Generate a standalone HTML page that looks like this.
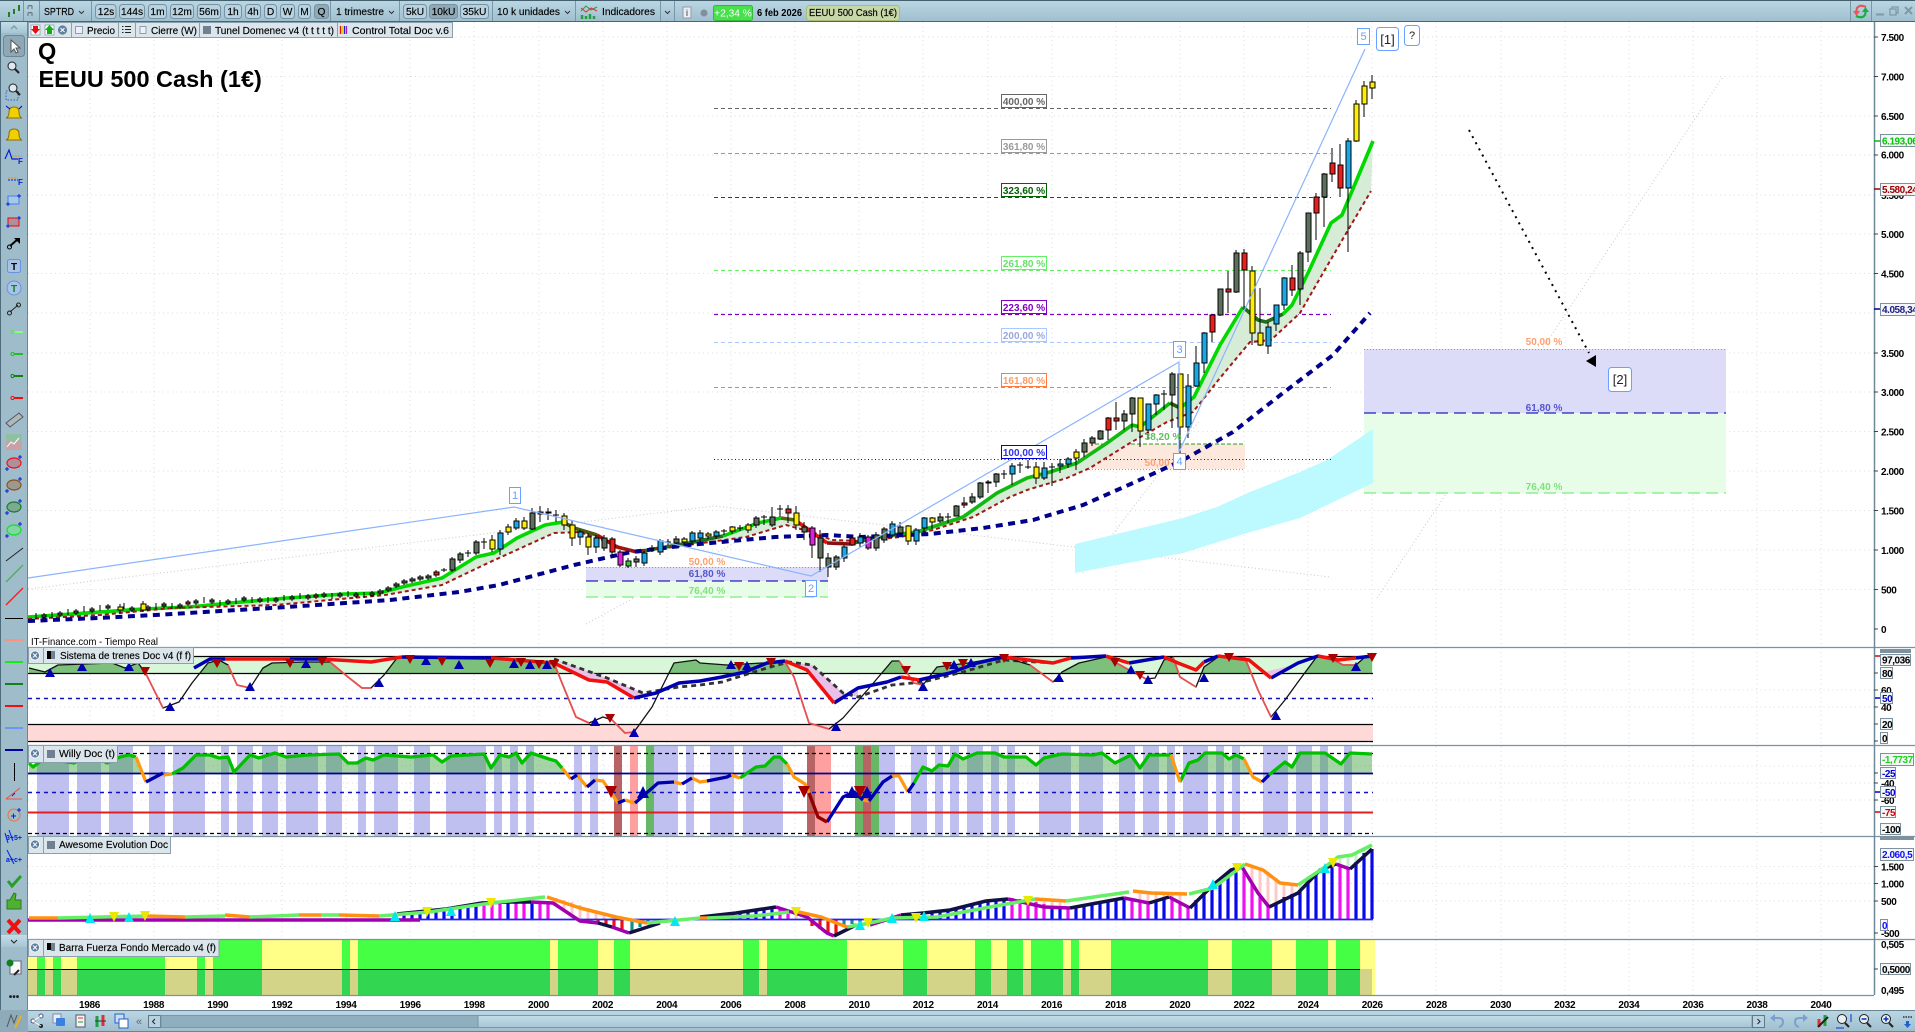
<!DOCTYPE html>
<html lang="es"><head><meta charset="utf-8"><title>EEUU 500 Cash (1€)</title>
<style>
html,body{margin:0;padding:0;background:#fff;width:1915px;height:1032px;overflow:hidden}
svg{display:block;font-family:"Liberation Sans",sans-serif}
text{fill:#000}
.t{font-size:10.2px;stroke:#000;stroke-width:.15}
.c{text-anchor:middle}
.a{font-size:10px;font-weight:bold;letter-spacing:-.45px}
.f{font-size:10px;font-weight:bold;text-anchor:middle;letter-spacing:-.3px}
.e{fill:none;stroke-linejoin:round;stroke-linecap:butt}
.v{fill:#fff;stroke:#7d919e}
</style></head><body>
<svg width="1915" height="1032" viewBox="0 0 1915 1032" xmlns="http://www.w3.org/2000/svg">
<defs>
<linearGradient id="g" x1="0" y1="0" x2="0" y2="1"><stop offset="0" stop-color="#bad7e4"/><stop offset="1" stop-color="#9fbecd"/></linearGradient>
<linearGradient id="g2" x1="0" y1="0" x2="0" y2="1"><stop offset="0" stop-color="#c2dde8"/><stop offset="1" stop-color="#a7c5d3"/></linearGradient>
<clipPath id="c1"><rect x="28" y="656" width="1346" height="17"/></clipPath>
<clipPath id="c2"><rect x="28" y="746" width="1346" height="27"/></clipPath>
</defs>
<rect width="1915" height="1032" fill="#fff"/>

<!-- grid -->
<path fill="none" stroke="#dcdcdc" stroke-dasharray="1 3.5" d="M90 22V995M154 22V995M218 22V995M282 22V995M346 22V995M410 22V995M474 22V995M539 22V995M603 22V995M667 22V995M731 22V995M795 22V995M859 22V995M923 22V995M988 22V995M1052 22V995M1116 22V995M1180 22V995M1244 22V995M1308 22V995M1372 22V995M1436 22V995M1501 22V995M1565 22V995M1629 22V995M1693 22V995M1757 22V995M1821 22V995M28 37H1874M28 76.5H1874M28 116H1874M28 155H1874M28 195H1874M28 234H1874M28 273.5H1874M28 313H1874M28 353H1874M28 392H1874M28 431.5H1874M28 471H1874M28 510.5H1874M28 550H1874M28 589.500H1874M28 690H1874M28 707H1874M28 766H1874M28 783H1874M28 800H1874M28 866.500H1874M28 883.500H1874M28 901H1874"/>

<!-- faint dotted trend lines -->
<path fill="none" stroke="#c8c8c8" stroke-dasharray="1 2.500" d="M28 589L715 506 963 534 1330 577M586 624L740 540M1083 573L1200 420M1377 598L1722 78"/>

<!-- zones -->
<rect x="586" y="567" width="242" height="14" fill="#dcdcf8"/><rect x="586" y="581" width="242" height="16" fill="#e8fde8"/>
<rect x="1083" y="444" width="162" height="25" fill="#fde8dd"/>
<rect x="1364" y="349" width="362" height="64" fill="#dcdcf8"/><rect x="1364" y="413" width="362" height="80" fill="#e8fde8"/>
<path fill="#b8faff" fill-opacity=".95" d="M1075 544L1100 538 1183 518 1217 507 1250 492 1300 472 1327 460 1373 429V483L1300 518 1247 533 1183 553 1133 562 1075 573z"/>

<!-- zone lines -->
<path fill="none" stroke="#ff7a3c" stroke-dasharray="1 2" d="M586 567.500H828M1083 469.500H1245M1364 349.500H1726"/>
<path fill="none" stroke="#2020c0" stroke-width="1.3" stroke-dasharray="12 6" d="M586 581H828M1364 413H1726"/>
<path fill="none" stroke="#80e880" stroke-width="1.3" stroke-dasharray="12 6" d="M586 597H828M1364 493H1726"/>
<path fill="none" stroke="#20a020" stroke-dasharray="4 2" d="M1095 444H1245"/>

<!-- fib lines -->
<g fill="none" stroke-dasharray="4 3">
<path stroke="#666" d="M714 108.500H1331"/><path stroke="#999" d="M714 153.500H1331"/><path stroke="#006400" d="M714 197.500H1331"/><path stroke="#66f066" d="M714 270.500H1331"/><path stroke="#8000c0" stroke-width="1.2" d="M714 314.500H1331"/><path stroke="#a8c8ff" d="M714 342.500H1331"/><path stroke="#ff7a3c" d="M714 387.500H1331"/><path stroke="#0000e0" stroke-dasharray="1 2.500" d="M714 459.500H1331"/>
</g>

<!-- MA fill -->
<path fill="#d6ecd6" d="M28 617L57 615 100 612 143 609 189 607 230 603 287 598 344 594 379 593 402 587 442 578 476 557 494 553 517 538 545 525 563 522 574 528 597 535 617 547 637 552 660 548 689 543 723 536 758 523 781 518 795 520 809 530 827 543 850 544 873 538 900 534 917 532 963 517 997 493 1027 478 1050 472 1077 463 1107 443 1132 425 1140 427 1170 403 1180 408 1194 397 1220 345 1243 307 1258 320 1266 322 1283 314 1292 305 1308 273 1331 223 1342 215 1373 141 1371 191 1344 237 1323 273 1300 313 1271 340 1250 342 1220 378 1193 412 1167 422 1130 443 1090 468 1067 478 1027 490 1010 497 973 517 933 530 900 537 860 541 832 540 815 533 786 525 746 537 666 548 631 551 580 532 554 533 488 563 442 585 385 595 275 605 172 608 100 615 28 619z"/>

<!-- green MA -->
<g class="e" stroke-width="3.600">
<path stroke="#00d800" d="M28 617L57 615 100 612 143 609 189 607 230 603 287 598 344 594 379 593 402 587 442 578 476 557 494 553 517 538 545 525 563 522"/>
<path stroke="#4a5a10" d="M563 522L574 528 597 535"/>
<path stroke="#a01008" d="M597 535L617 547 637 552"/>
<path stroke="#1f6f1f" d="M637 552L660 548 689 543 723 536"/>
<path stroke="#00d000" d="M723 536L758 523 781 518"/>
<path stroke="#556b10" d="M781 518L795 520"/>
<path stroke="#e81010" d="M795 520L809 530 827 543"/>
<path stroke="#8a1010" d="M827 543L850 544"/>
<path stroke="#2a6a1a" d="M850 544L873 538 900 534"/>
<path stroke="#10b810" d="M900 534L917 532 963 517 997 493 1027 478 1050 472 1077 463 1107 443 1132 425"/>
<path stroke="#00c000" d="M1132 425L1140 427 1170 403"/>
<path stroke="#2c5a10" d="M1170 403L1180 408"/>
<path stroke="#00d800" d="M1180 408L1194 397 1220 345 1243 307"/>
<path stroke="#1f6f1f" d="M1243 307L1258 320 1266 322 1283 314"/>
<path stroke="#00d800" d="M1283 314L1292 305 1308 273 1331 223 1342 215 1373 141"/>
</g>
<path class="e" stroke="#a01818" stroke-width="2" stroke-dasharray="4 3" d="M28 619L100 615 172 608 275 605 385 595 442 585 488 563 554 533 580 532 631 551 666 548 746 537 786 525 815 533 832 540 860 541 900 537 933 530 973 517 1010 497 1027 490 1067 478 1090 468 1130 443 1167 422 1193 412 1220 378 1250 342 1271 340 1300 313 1323 273 1344 237 1371 191"/>
<path class="e" stroke="#00008b" stroke-width="4" stroke-dasharray="7 5.500" d="M28 621L98 618 155 615 287 607 390 600 459 592 499 585 574 565 631 552 689 545 775 537 827 535 861 537 930 534 983 528 1033 520 1083 505 1133 483 1183 460 1233 432 1283 393 1333 355 1370 313"/>

<!-- candles -->
<g shape-rendering="crispEdges" stroke="#000">
<path fill="none" d="M1372 75V99M1364 81V117M1356 100V142M1348 138V252M1340 144V197M1332 148V182M1324 173V227M1316 193V240M1308 213V262M1300 251V305M1292 265V296M1284 277V310M1276 305V331M1268 322V354M1260 288V346M1252 266V345M1244 249V307M1236 250V293M1228 271V313M1220 289V316M1212 315V342M1204 332V373M1196 346V387M1188 374V438M1180 374V453M1172 372V428M1164 390V410M1156 394V415M1148 404V439M1140 398V447M1132 397V432M1124 410V430M1116 402V430M1108 417V440M1100 430V440M1092 436V446M1084 439V457M1076 449V470M1068 457V468M1060 459V473M1052 463V486M1044 462V480M1036 462V484M1028 460V469M1020 462V473M1012 463V485M1004 470V479M996 473V487M988 480V493M980 482V499M972 493V504M964 497V508M956 505V516M948 513V523M940 513V523M932 517V529M924 517V532M916 528V545M908 525V545M900 522V535M892 521V538M884 527V543M876 532V551M868 535V550M860 533V547M852 535V546M844 545V562M836 555V570M828 553V577M820 530V572M812 526V558M804 522V540M796 506V530M788 505V523M780 505V517M772 507V527M764 515V525M756 516V528M748 523V533M740 525V531M732 526V534M724 529V535M716 530V539M708 532V539M700 530V542M692 531V545M684 537V545M676 536V546M668 539V545M660 539V555M652 545V552M644 551V566M636 556V567M628 558V568M620 550V567M612 537V555M604 535V551M596 535V553M588 533V555M580 530V545M572 520V546M564 513V530M556 510V522M548 508V520M540 506V522M532 508V530M524 517V530M516 518V530M508 524V535M500 530V555M492 535V552M484 538V549M476 540V555M468 550V557M460 552V563M452 557V572M444 568V572M436 570V577M428 574V580M420 575V581M412 577V583M404 579V585M396 582V588M388 586V592M380 589V595M372 591V597M364 592V598M356 592V598M348 591V597M340 592V598M332 593V599M324 592V598M316 593V599M308 594V600M300 593V599M292 595V601M284 595V601M276 597V603M268 597V603M260 597V603M252 597V603M244 596V602M236 598V604M228 599V605M220 600V606M212 598V604M204 597V603M196 599V605M188 600V606M180 603V609M172 603V609M164 602V608M156 603V609M148 605V611M143 601V612M132 606V612M124 603V609M120 604V613M108 604V610M100 605V611M92 607V613M84 606V612M76 609V615M68 609V615M60 611V617M52 612V618M44 613V619M36 613V619"/>
<path fill="#ffee00" d="M1370 82h5v6h-5zM1362 86h5v18h-5zM1354 104h5v37h-5zM1258 333h5v12h-5zM1250 271h5v62h-5zM1178 374h5v53h-5zM1138 398h5v33h-5zM1074 452h5v6h-5zM1034 467h5v11h-5zM930 518h5v4h-5zM906 526h5v15h-5zM794 513h5v12h-5zM746 525h5v5h-5zM730 527h5v4h-5zM706 534h5v2h-5zM682 539h5v3h-5zM586 537h5v10h-5zM570 525h5v13h-5zM562 516h5v9h-5zM522 521h5v7h-5zM506 527h5v5h-5zM490 540h5v9h-5zM141 604h5v6h-5zM118 607h5v3h-5z"/>
<path fill="#18a8e8" d="M1346 141h5v47h-5zM1282 278h5v27h-5zM1274 305h5v19h-5zM1266 327h5v19h-5zM1202 333h5v30h-5zM1194 363h5v23h-5zM1186 386h5v41h-5zM1154 395h5v9h-5zM1146 404h5v26h-5zM1066 459h5v5h-5zM1058 464h5v2h-5zM1042 468h5v10h-5zM1010 466h5v8h-5zM922 518h5v10h-5zM914 530h5v11h-5zM890 524h5v11h-5zM858 537h5v6h-5zM842 547h5v11h-5zM714 532h5v4h-5zM698 533h5v5h-5zM690 533h5v8h-5zM658 541h5v11h-5zM642 553h5v10h-5zM594 538h5v9h-5zM578 532h5v5h-5zM514 521h5v7h-5zM498 533h5v16h-5z"/>
<path fill="#5d6f5d" d="M1322 174h5v23h-5zM1306 213h5v39h-5zM1298 253h5v36h-5zM1234 253h5v39h-5zM1218 289h5v26h-5zM1170 374h5v21h-5zM1130 398h5v16h-5zM1122 414h5v7h-5zM1098 431h5v8h-5zM1090 438h5v5h-5zM1082 443h5v9h-5zM994 474h5v8h-5zM978 483h5v14h-5zM970 497h5v5h-5zM954 506h5v10h-5zM938 517h5v4h-5zM898 527h5v6h-5zM882 529h5v11h-5zM874 535h5v13h-5zM834 557h5v10h-5zM826 558h5v9h-5zM818 538h5v20h-5zM802 527h5v5h-5zM770 517h5v8h-5zM754 518h5v7h-5zM674 539h5v4h-5zM634 559h5v3h-5zM602 538h5v10h-5zM538 512h5v2h-5zM530 513h5v16h-5zM474 542h5v11h-5zM458 554h5v6h-5zM450 559h5v11h-5zM426 576h5v2h-5zM418 577h5v2h-5zM410 579h5v2h-5zM402 581h5v2h-5zM394 584h5v2h-5zM386 588h5v2h-5zM378 591h5v2h-5zM370 593h4v2h-4zM354 594h4v2h-4zM338 594h4v2h-4zM322 594h4v2h-4zM306 596h4v2h-4zM290 597h4v2h-4zM274 599h4v2h-4zM258 599h4v2h-4zM242 598h4v2h-4zM226 601h4v2h-4zM210 600h4v2h-4zM194 601h4v2h-4zM178 605h4v2h-4zM162 604h4v2h-4zM146 607h4v2h-4zM130 608h4v2h-4zM106 606h4v2h-4zM90 609h4v2h-4zM74 611h4v2h-4zM58 613h4v2h-4zM42 615h4v2h-4z"/>
<path fill="#ee1c1c" d="M1338 165h5v23h-5zM1330 163h5v11h-5zM1314 197h5v16h-5zM1290 278h5v12h-5zM1242 253h5v17h-5zM1226 289h5v3h-5zM1210 315h5v17h-5zM1114 418h5v3h-5zM1106 418h5v12h-5zM986 482h5v1h-5zM962 503h5v2h-5zM850 538h5v7h-5zM786 509h5v4h-5zM610 539h5v13h-5zM546 512h5v1h-5zM434 572h5v3h-5zM314 595h4v2h-4zM186 602h4v2h-4z"/>
<path fill="#e020e0" d="M866 537h5v11h-5zM810 528h5v17h-5zM618 552h5v13h-5z"/>
<path fill="#33cc33" d="M626 561h5v5h-5z"/>
<path fill="none" d="M1161 394h6M1049 467h6M1025 467h6M1017 465h6M1001 474h6M945 517h6M777 509h6M761 517h6M737 528h6M721 531h6M665 542h6M649 548h6M553 515h6M481 542h6M465 553h6M441 570h6"/>
</g>

<!-- elliott -->
<path fill="none" stroke="#8ab4ff" stroke-width="1.200" d="M28 578L514 507 811 576 1179 362V452L1365 49"/>
<path fill="none" stroke="#000" stroke-width="2" stroke-dasharray="2 5" d="M1469 130L1589 353"/>
<path fill="#000" d="M1596 355V367L1586 361z"/>

<!-- fib labels -->
<g class="c" font-size="10" font-weight="bold">
<rect class="v" x="1001.500" y="94.500" width="45" height="13" fill="#fff" style="stroke:#666"/><text x="1024" y="105" fill="#666" style="fill:#666">400,00 %</text>
<rect x="1001.500" y="139.500" width="45" height="13" fill="#fff" stroke="#999"/><text x="1024" y="150" style="fill:#999">361,80 %</text>
<rect x="1001.500" y="183.500" width="45" height="13" fill="#fff" stroke="#006400"/><text x="1024" y="194" style="fill:#006400">323,60 %</text>
<rect x="1001.500" y="256.500" width="45" height="13" fill="#fff" stroke="#66f066"/><text x="1024" y="267" style="fill:#66e066">261,80 %</text>
<rect x="1001.500" y="300.500" width="45" height="13" fill="#fff" stroke="#8000c0"/><text x="1024" y="311" style="fill:#8000c0">223,60 %</text>
<rect x="1001.500" y="328.500" width="45" height="13" fill="#fff" stroke="#a8c8ff"/><text x="1024" y="339" style="fill:#98a8e0">200,00 %</text>
<rect x="1001.500" y="373.500" width="45" height="13" fill="#fff" stroke="#ff7a3c"/><text x="1024" y="384" style="fill:#ff9a60">161,80 %</text>
<rect x="1001.500" y="445.500" width="45" height="13" fill="#fff" stroke="#0000e0"/><text x="1024" y="456" style="fill:#3030f0">100,00 %</text>
<text x="707" y="565" style="fill:#ffa070">50,00 %</text>
<text x="707" y="577" style="fill:#5555cc">61,80 %</text>
<text x="707" y="594" style="fill:#80e080">76,40 %</text>
<text x="1163" y="440" style="fill:#60c060">38,20 %</text>
<text x="1163" y="466" style="fill:#ffa070">50,00 %</text>
<text x="1544" y="345" style="fill:#ffa070">50,00 %</text>
<text x="1544" y="411" style="fill:#5555cc">61,80 %</text>
<text x="1544" y="490" style="fill:#80e080">76,40 %</text>
</g>

<!-- wave labels -->
<g fill="#fff" stroke="#6aa0ff">
<rect x="509.500" y="487.500" width="11" height="16"/><rect x="805.500" y="580.500" width="11" height="16"/><rect x="1173.500" y="341.500" width="12" height="16"/><rect x="1173.500" y="453.500" width="12" height="16"/><rect x="1357.500" y="28.500" width="12" height="16"/><rect x="1376.500" y="27.500" width="22" height="23" rx="3"/><rect x="1404.500" y="25.500" width="15" height="20" rx="3"/><rect x="1608.500" y="367.500" width="23" height="24" rx="3"/>
</g>
<g class="c" font-size="11">
<text x="515" y="499" style="fill:#6aa0ff">1</text><text x="811" y="592" style="fill:#6aa0ff">2</text><text x="1179.500" y="353" style="fill:#6aa0ff">3</text><text x="1179.500" y="465" style="fill:#6aa0ff">4</text><text x="1363.500" y="40" style="fill:#6aa0ff">5</text>
<text x="1387.500" y="44" font-size="13" style="fill:#222">[1]</text><text x="1412" y="39" font-size="11" style="fill:#222">?</text><text x="1620" y="384" font-size="13" style="fill:#222">[2]</text>
</g>

<!-- title -->
<text x="38" y="59" font-size="23.500" font-weight="bold">Q</text>
<text x="38.500" y="87" font-size="23.500" font-weight="bold">EEUU 500 Cash (1€)</text>
<text x="31" y="645" class="t" style="stroke-width:0" textLength="127" lengthAdjust="spacingAndGlyphs">IT-Finance.com - Tiempo Real</text>

<!-- PANE 1 -->
<rect x="28" y="656" width="1345" height="17" fill="#d8f6d8"/>
<rect x="28" y="724" width="1345" height="17" fill="#ffd8d8"/>
<path clip-path="url(#c1)" fill="#7cc07c" d="M29 668L45 672 58 665 112 663 125 668 138 663 145 672 163 708 179 702 192 683 208 663 219 660 228 665 237 685 250 688 263 668 272 663 304 662 330 662 348 677 362 688 371 688 384 675 397 658 424 658 491 658 554 663 562 683 576 717 589 723 603 717 612 720 625 733 634 732 652 707 674 663 696 660 700 663 727 665 762 663 785 662 794 677 809 723 829 729 843 718 870 687 892 661 899 661 914 683 923 685 937 667 968 663 1004 657 1030 665 1053 682 1062 672 1079 663 1106 657 1129 670 1146 679 1155 678 1164 660 1173 657 1180 677 1196 687 1204 667 1218 657 1245 658 1258 690 1271 717 1285 700 1298 682 1318 655 1334 660 1343 665 1356 665 1365 657 1372 657V741H29z"/>
<path fill="none" stroke="#000" stroke-width="1.200" d="M28 656.500H1373M28 673.500H1373M28 724.500H1373M28 741.500H1373"/>
<path fill="none" stroke="#1010c0" stroke-width="1.500" stroke-dasharray="4 4" d="M28 698.500H1373"/>
<path fill="#e8c0e8" d="M554 659L589 680 607 682 634 698 656 693 643 693 607 678zM789 662L812 665 843 693 858 697 858 688 834 703 807 670zM1245 659L1271 678 1298 663 1285 667 1265 672z"/>
<path class="e" stroke="#333" stroke-width="2.800" stroke-dasharray="5 4" d="M554 659L607 678 643 693 679 687 700 685 722 682 767 668 789 662 812 665 843 693 858 697 892 685 923 682 963 672 1004 660 1053 663"/>
<path class="e" stroke="#111" stroke-width="1.300" d="M29 668L45 672 58 665 112 663 125 668 138 663 145 672 163 708 179 702 192 683 208 663 219 660 228 665 237 685 250 688 263 668 272 663 304 662 330 662 348 677 362 688 371 688 384 675 397 658 424 658 491 658 554 663 562 683 576 717 589 723 603 717 612 720 625 733 634 732 652 707 674 663 696 660 700 663 727 665 762 663 785 662 794 677 809 723 829 729 843 718 870 687 892 661 899 661 914 683 923 685 937 667 968 663 1004 657 1030 665 1053 682 1062 672 1079 663 1106 657 1129 670 1146 679 1155 678 1164 660 1173 657 1180 677 1196 687 1204 667 1218 657 1245 658 1258 690 1271 717 1285 700 1298 682 1318 655 1334 660 1343 665 1356 665 1365 657 1372 657"/>
<g class="e" stroke="#e85050" stroke-width="1.800"><path d="M145 672L163 708M228 665L237 685 250 688M330 662L348 677 362 688 371 688M554 663L562 683 576 717 589 723M612 720L625 733 634 732M785 662L794 677 809 723 829 729M899 661L914 683 923 685M1030 665L1053 682M1106 657L1129 670 1146 679M1173 657L1180 677 1196 687M1245 658L1258 690 1271 717M1334 660L1343 665 1356 665"/></g>
<g class="e" stroke-width="3.500">
<path stroke="#0000b0" d="M194 668L210 659 225 659M290 659L321 659M402 657L491 658M634 698L656 693 679 683 700 681 722 677 745 672 767 663 785 661M834 703L858 688 887 682 901 677M919 680L950 673 977 663 1004 657M1071 658L1106 656M1129 663L1164 657M1204 662L1218 656M1271 678L1298 663 1318 656M1356 658L1372 656"/>
<path stroke="#f01010" d="M225 659L290 659M321 659L371 662 402 657M491 658L554 663 589 680 607 682 634 698M785 661L807 670 834 703M901 677L919 680M1004 657L1053 663 1071 658M1106 656L1129 663M1164 657L1178 663 1196 670 1204 662M1218 656L1249 660 1271 678M1318 656L1338 660 1356 658"/>
</g>
<path fill="#0000b0" d="M45 677l5-9 5 9zM77 671l5-9 5 9zM124 671l5-9 5 9zM165 711l5-9 5 9zM245 691l5-9 5 9zM301 668l5-9 5 9zM374 687l5-9 5 9zM421 665l5-9 5 9zM454 669l5-9 5 9zM509 668l5-9 5 9zM525 669l5-9 5 9zM542 669l5-9 5 9zM590 726l5-9 5 9zM629 737l5-9 5 9zM726 669l5-9 5 9zM742 670l5-9 5 9zM831 731l5-9 5 9zM918 691l5-9 5 9zM949 669l5-9 5 9zM966 667l5-9 5 9zM1054 682l5-9 5 9zM1126 674l5-9 5 9zM1143 684l5-9 5 9zM1199 682l5-9 5 9zM1271 720l5-9 5 9zM1351 671l5-9 5 9z"/>
<path fill="#a80000" d="M140 667h10l-5 9zM212 659h10l-5 9zM285 659h10l-5 9zM317 657h10l-5 9zM405 655h10l-5 9zM437 657h10l-5 9zM485 659h10l-5 9zM516 658h10l-5 9zM534 660h10l-5 9zM549 660h10l-5 9zM605 714h10l-5 9zM734 662h10l-5 9zM766 658h10l-5 9zM901 666h10l-5 9zM942 662h10l-5 9zM958 659h10l-5 9zM999 654h10l-5 9zM1110 658h10l-5 9zM1135 671h10l-5 9zM1224 653h10l-5 9zM1328 654h10l-5 9zM1367 653h10l-5 9z"/>

<!-- PANE 2 -->
<path fill="#c0c0f0" d="M37 746h32v90h-32zM77 746h24v90h-24zM109 746h24v90h-24zM149 746h16v90h-16zM173 746h32v90h-32zM221 746h8v90h-8zM237 746h16v90h-16zM262 746h16v90h-16zM286 746h32v90h-32zM326 746h16v90h-16zM358 746h8v90h-8zM374 746h24v90h-24zM414 746h16v90h-16zM446 746h40v90h-40zM494 746h8v90h-8zM510 746h8v90h-8zM526 746h8v90h-8zM574 746h8v90h-8zM590 746h8v90h-8zM654 746h24v90h-24zM686 746h8v90h-8zM710 746h24v90h-24zM743 746h40v90h-40zM879 746h16v90h-16zM911 746h16v90h-16zM935 746h8v90h-8zM950 746h9v90h-9zM967 746h16v90h-16zM991 746h8v90h-8zM1007 746h8v90h-8zM1039 746h32v90h-32zM1079 746h24v90h-24zM1119 746h16v90h-16zM1143 746h16v90h-16zM1167 746h8v90h-8zM1183 746h25v90h-25zM1216 746h8v90h-8zM1232 746h8v90h-8zM1263 746h25v90h-25zM1296 746h16v90h-16zM1320 746h8v90h-8zM1344 746h8v90h-8z"/>
<path fill="#b86464" d="M614 746h8v90h-8zM807 746h8v90h-8zM863 746h8v90h-8z"/>
<path fill="#ffa0a0" d="M630 746h8v90h-8zM815 746h16v90h-16z"/>
<path fill="#66b866" d="M646 746h8v90h-8zM855 746h8v90h-8zM871 746h8v90h-8z"/>
<path clip-path="url(#c2)" fill="#3ca03c" fill-opacity=".45" d="M29 763L33 767 45 758 67 762 74 763 85 757 98 758 107 763 120 757 129 755 136 757 146 782 172 774 183 768 196 755 210 755 219 758 228 757 234 772 250 755 259 758 275 753 286 757 308 755 339 754 348 763 357 763 366 758 373 760 384 755 411 757 433 755 442 762 451 756 484 754 491 768 500 755 509 757 516 753 522 763 531 753 549 759 556 761 562 768 571 779V800H731V775L740 778 756 767 765 766 774 757 780 757 787 764 794 777 805 790H908L914 783 923 767 932 771 939 765 948 766 955 754 963 759 977 753 995 753 1004 757 1026 757 1036 765 1044 758 1062 754 1093 755 1102 753 1115 763 1131 755 1140 768 1149 755 1171 755 1180 782 1189 763 1198 760 1205 753 1222 753 1229 759 1236 755 1244 759 1253 777 1262 782 1269 775 1285 762 1292 767 1300 753 1325 753 1341 764 1350 753 1372 754V790H29z"/>
<path fill="none" stroke="#000" stroke-width="1.200" stroke-dasharray="4 3" d="M28 753.500H1373M28 833.500H1373"/>
<path fill="none" stroke="#000090" stroke-width="1.800" d="M28 773.500H1373"/>
<path fill="none" stroke="#1010c0" stroke-width="1.500" stroke-dasharray="4 4" d="M28 792.500H1373"/>
<path fill="none" stroke="#e02020" stroke-width="2" d="M28 812.500H1373"/>
<g class="e" stroke-width="3.300">
<path stroke="#00c000" d="M29 763L33 767 45 758 67 762 74 763 85 757 98 758 107 763 120 757 129 755 136 757M172 774L183 768 196 755 210 755 219 758 228 757 234 772 250 755 259 758 275 753 286 757 308 755 339 754 348 763 357 763 366 758 373 760 384 755 411 757 433 755 442 762 451 756 484 754 491 768 500 755 509 757 516 753 522 763 531 753 549 759 556 761 562 768M740 778L756 767 765 766 774 757 780 757 787 764M914 783L923 767 932 771 939 765 948 766 955 754 963 759 977 753 995 753 1004 757 1026 757 1036 765 1044 758 1062 754 1093 755 1102 753 1115 763 1131 755 1140 768 1149 755 1171 755M1180 782L1189 763 1198 760 1205 753 1222 753 1229 759 1236 755 1244 759M1269 775L1285 762 1292 767 1300 753 1325 753 1341 764 1350 753 1372 754"/>
<path stroke="#ff9a10" d="M136 757L146 782M163 775L172 774M562 768L571 779M577 775L587 787M595 780L603 781 618 803M625 800L635 803M674 782L682 784M692 778L700 782 707 781M731 775L740 778M787 764L794 777 805 784 809 793M863 800L869 801M892 776L899 776 908 792M1171 755L1180 782M1244 759L1253 777 1262 782"/>
<path stroke="#0000b0" d="M146 782L163 773M571 779L577 775M587 787L595 780M618 803L625 800M635 803L658 783 674 782M682 784L692 778M707 781L727 777 731 775M827 822L843 797 854 792 863 800M869 801L883 782 892 776M908 792L914 783M1262 782L1269 775"/>
<path stroke="#900000" d="M809 793L818 817 827 822"/>
</g>
<path fill="#a80000" d="M605 786h12l-6 12zM798 786h12l-6 12zM854 786h12l-6 12z"/>
<path fill="#0000b0" d="M637 798l6-12 6 12zM846 798l6-12 6 12zM861 798l6-12 6 12z"/>

<!-- PANE 3 -->
<path fill="none" stroke="#ffc8c8" stroke-width="3" d="M556 898V905M564 900V912M572 902V919M580 905V919M588 908V919M596 911V919M604 913V919M612 915V919M620 917V919M796 912V919M804 915V919M1012 899V910M1020 899V910M1028 899V908M1036 899V908M1044 900V908M1052 900V908M1060 901V908M1140 892V900M1148 892V903M1156 893V900M1164 893V898M1172 894V899M1180 894V903M1244 864V869M1252 866V884M1260 868V897M1268 872V906M1276 878V903M1284 883V897M1292 885V894"/>
<path fill="none" stroke="#c8f0c8" stroke-width="3" d="M1300 884V892M1308 878V883M1316 872V874M1340 856V866M1348 855V868M1356 854V862M1364 848V853"/>
<path fill="none" stroke="#0808f0" stroke-width="3.200" d="M404 919V914M412 919V913M420 919V912M428 919V911M436 919V910M444 919V909M452 919V908M460 919V906M468 919V905M476 919V904M508 919V902M532 919V902M716 919V914M724 919V914M732 919V913M740 919V912M748 919V911M756 919V910M764 919V909M772 919V908M924 919V913M932 919V912M940 919V911M948 919V910M956 919V908M964 919V906M972 919V904M980 919V902M988 919V901M996 919V900M1004 919V899M1052 919V907M1060 919V908M1076 919V908M1084 919V906M1092 919V905M1100 919V904M1108 919V902M1116 919V900M1124 919V898M1156 919V901M1164 919V898M1196 919V900M1204 919V892M1212 919V886M1220 919V880M1228 919V873M1236 919V868M1276 919V903M1284 919V897M1292 919V894M1300 919V892M1308 919V883M1316 919V874M1324 919V869M1332 919V865M1356 919V862M1364 919V853M1372 919V849"/>
<path fill="none" stroke="#f010f0" stroke-width="3.200" d="M484 919V903M492 919V903M500 919V902M516 919V902M524 919V902M540 919V903M548 919V903M780 919V907M788 919V911M1012 919V898M1020 919V899M1028 919V900M1036 919V902M1044 919V904M1068 919V908M1132 919V898M1140 919V900M1148 919V903M1172 919V898M1180 919V903M1188 919V907M1244 919V869M1252 919V884M1260 919V897M1268 919V906M1340 919V866M1348 919V868"/>
<path fill="none" stroke="#f01010" stroke-width="3.200" d="M598 919V923M606 919V926M614 919V928M622 919V931M812 919V926M820 919V929M828 919V933M836 919V935"/>
<path fill="none" stroke="#109090" stroke-width="3.200" d="M632 919V931M640 919V927M648 919V924M844 919V926M852 919V924M860 919V923"/>
<path fill="none" stroke="#2020f0" stroke-width="1.800" d="M28 919.500H1373"/>
<g class="e" stroke-width="3.500">
<path stroke="#a000b0" d="M531 902L553 903 580 921 598 923M612 927L629 933M776 907L807 917 827 933 834 936M870 925L892 918 901 915M1008 899L1044 907 1070 908M1124 898L1149 903M1169 897L1190 908M1242 867L1258 893 1269 907M1336 864L1350 869M28 920H420"/>
<path stroke="#111144" d="M397 914L446 909 482 903 509 902 531 902M598 923L612 927M629 933L660 923M700 917L736 913 776 907M834 936L856 925M901 915L923 913 950 910 986 901 1008 899M1070 908L1124 898M1149 903L1169 897M1190 908L1213 885 1231 870 1242 867M1269 907L1298 893 1320 870 1336 864M1350 869L1372 849"/>
<path stroke="#66ee66" d="M58 918L147 916M185 917L225 916M250 917L299 915M321 915L339 915M379 916L429 912 491 903 545 897M647 923L700 918M707 918L754 916 789 912M847 927L870 923 892 918 937 917 990 907 1035 899M1066 901L1129 892M1189 894L1213 888 1245 864M1298 885L1325 867 1338 857 1352 855 1372 845"/>
<path stroke="#ff9010" d="M29 918L58 918M147 916L185 917M225 915L250 917M299 915L321 915M339 915L379 916M547 897L580 908 616 917 647 923M700 918L707 918M794 911L821 917 847 927M1035 899L1066 901M1133 891L1151 893 1187 894M1245 864L1263 870 1280 883 1298 885"/>
</g>
<path fill="#00e8f0" d="M85 923l5-10 5 10zM124 922l5-10 5 10zM390 921l5-10 5 10zM446 916l5-10 5 10zM670 926l5-10 5 10zM855 930l5-10 5 10zM887 923l5-10 5 10zM919 921l5-10 5 10zM1208 889l5-10 5 10zM1320 873l5-10 5 10z"/>
<path fill="#e8e800" d="M109 912h10l-5 10zM140 911h10l-5 10zM422 907h10l-5 10zM486 898h10l-5 10zM791 907h10l-5 10zM863 918h10l-5 10zM911 913h10l-5 10zM1023 896h10l-5 10zM1232 863h10l-5 10zM1328 858h10l-5 10z"/>

<!-- PANE 4 -->
<rect x="28" y="940" width="1347" height="29" fill="#44ff44"/><rect x="28" y="969" width="1347" height="26" fill="#33d650"/>
<path fill="#ffff88" d="M28 940H37V969H28zM45 940H53V969H45zM61 940H77V969H61zM165 940H197V969H165zM205 940H213V969H205zM262 940H342V969H262zM350 940H358V969H350zM550 940H558V969H550zM598 940H614V969H598zM630 940H743V969H630zM759 940H767V969H759zM847 940H903V969H847zM927 940H975V969H927zM991 940H1007V969H991zM1023 940H1031V969H1023zM1063 940H1071V969H1063zM1079 940H1111V969H1079zM1208 940H1232V969H1208zM1272 940H1296V969H1272zM1328 940H1336V969H1328zM1360 940H1375V995H1360z"/>
<path fill="#d4d488" d="M28 969H37V995H28zM45 969H53V995H45zM61 969H77V995H61zM165 969H197V995H165zM205 969H213V995H205zM262 969H342V995H262zM350 969H358V995H350zM550 969H558V995H550zM598 969H614V995H598zM630 969H743V995H630zM759 969H767V995H759zM847 969H903V995H847zM927 969H975V995H927zM991 969H1007V995H991zM1023 969H1031V995H1023zM1063 969H1071V995H1063zM1079 969H1111V995H1079zM1208 969H1232V995H1208zM1272 969H1296V995H1272zM1328 969H1336V995H1328zM1360 969H1372V995H1360z"/>
<path stroke="#000" fill="none" d="M28 969.500H1360"/>

<!-- separators -->
<path fill="none" stroke="#7d919e" stroke-width="1.200" d="M28 647.500H1915M28 745.500H1915M28 836.500H1915M28 939.500H1915M28 995.500H1874"/>
<path stroke="#6e8a9a" stroke-width="1.500" d="M1874.500 22V995"/>
<path stroke="#444" fill="none" d="M1874 37h4M1874 76.500h4M1874 116h4M1874 155h4M1874 234h4M1874 273.500h4M1874 353h4M1874 392h4M1874 431.500h4M1874 471h4M1874 510.500h4M1874 550h4M1874 589.500h4M1874 629h4M1874 673h4M1874 690h4M1874 707h4M1874 724h4M1874 741h4M1874 773h4M1874 783h4M1874 800h4M1874 866.500h4M1874 883.500h4M1874 901h4M1874 933h4M1874 969h4"/>

<!-- price axis -->
<g class="a">
<text x="1881" y="41">7.500</text><text x="1881" y="80.500">7.000</text><text x="1881" y="120">6.500</text><text x="1881" y="158.500">6.000</text><text x="1881" y="199">5.500</text><text x="1881" y="238">5.000</text><text x="1881" y="277.500">4.500</text><text x="1881" y="357">3.500</text><text x="1881" y="396">3.000</text><text x="1881" y="435.500">2.500</text><text x="1881" y="475">2.000</text><text x="1881" y="514.500">1.500</text><text x="1881" y="554">1.000</text><text x="1881" y="593.500">500</text><text x="1881" y="633">0</text>
<text x="1881" y="694">60</text><text x="1881" y="711">40</text>
<text x="1881" y="787">-40</text><text x="1881" y="804">-60</text>
<text x="1881" y="870.500">1.500</text><text x="1881" y="887.500">1.000</text><text x="1881" y="905">500</text><text x="1881" y="937">-500</text>
<text x="1881" y="948">0,505</text><text x="1881" y="994">0,495</text>
</g>
<rect x="1880" y="649" width="31" height="4" fill="#7d919e"/><rect x="1880" y="837" width="34" height="3" fill="#7d919e"/>
<g fill="#f4f6f7" stroke="#7d919e">
<rect x="1880.500" y="134.500" width="36" height="12"/><rect x="1880.500" y="183.500" width="36" height="12"/><rect x="1880.500" y="303.500" width="36" height="12"/>
<rect x="1880.500" y="654.500" width="30" height="11"/><rect x="1880.500" y="667.500" width="12" height="11"/><rect x="1880.500" y="692.500" width="12" height="11"/><rect x="1880.500" y="718.500" width="12" height="11"/><rect x="1880.500" y="732.500" width="7" height="11"/>
<rect x="1880.500" y="753.500" width="33" height="12"/><rect x="1880.500" y="767.500" width="15" height="11"/><rect x="1880.500" y="786.500" width="15" height="11"/><rect x="1880.500" y="806.500" width="15" height="11"/><rect x="1880.500" y="823.500" width="20" height="11"/>
<rect x="1880.500" y="848.500" width="33" height="12"/><rect x="1880.500" y="919.500" width="7" height="11"/><rect x="1880.500" y="963.500" width="30" height="11"/>
</g>
<path fill="none" stroke-width="1.500" d="M1874 141h6" stroke="#00c000"/><path fill="none" stroke-width="1.500" d="M1874 189h6" stroke="#a00000"/><path fill="none" stroke-width="1.500" d="M1874 309h6" stroke="#000090"/><path fill="none" stroke-width="1.500" d="M1875 656h5" stroke="#e00000"/><path fill="none" stroke-width="1.500" d="M1875 698h5" stroke="#0000d0"/><path fill="none" stroke-width="1.500" d="M1875 792h5" stroke="#0000d0"/><path fill="none" stroke-width="1.500" d="M1875 812h5" stroke="#e00000"/>
<g class="a">
<text x="1882" y="144.500" style="fill:#00c800">6.193,06</text><text x="1882" y="193" style="fill:#a00000">5.580,24</text><text x="1882" y="313" style="fill:#202080">4.058,34</text>
<text x="1882" y="663.500">97,036</text><text x="1882" y="677">80</text><text x="1882" y="702" style="fill:#0000d0">50</text><text x="1882" y="728">20</text><text x="1882" y="742">0</text>
<text x="1882" y="763" style="fill:#20d020">-1,7737</text><text x="1882" y="777" style="fill:#0000d0">-25</text><text x="1882" y="796" style="fill:#0000d0">-50</text><text x="1882" y="816" style="fill:#d00000">-75</text><text x="1882" y="833">-100</text>
<text x="1882" y="858" style="fill:#1010ff">2.060,5</text><text x="1882" y="929" style="fill:#1010ff">0</text><text x="1882" y="973">0,5000</text>
</g>

<!-- time axis -->
<g class="f">
<text x="89.500" y="1008">1986</text><text x="153.600" y="1008">1988</text><text x="217.800" y="1008">1990</text><text x="281.900" y="1008">1992</text><text x="346" y="1008">1994</text><text x="410.200" y="1008">1996</text><text x="474.300" y="1008">1998</text><text x="538.500" y="1008">2000</text><text x="602.600" y="1008">2002</text><text x="666.800" y="1008">2004</text><text x="730.900" y="1008">2006</text><text x="795" y="1008">2008</text><text x="859.200" y="1008">2010</text><text x="923.300" y="1008">2012</text><text x="987.500" y="1008">2014</text><text x="1051.600" y="1008">2016</text><text x="1115.700" y="1008">2018</text><text x="1179.900" y="1008">2020</text><text x="1244" y="1008">2022</text><text x="1308.200" y="1008">2024</text><text x="1372.300" y="1008">2026</text><text x="1436.400" y="1008">2028</text><text x="1500.600" y="1008">2030</text><text x="1564.700" y="1008">2032</text><text x="1628.900" y="1008">2034</text><text x="1693" y="1008">2036</text><text x="1757" y="1008">2038</text><text x="1821" y="1008">2040</text>
</g>

<!-- pane legends -->
<g fill="#dbe6ec" stroke="#8aa0ad">
<rect x="28.500" y="647.500" width="165" height="16"/><rect x="28.500" y="745.500" width="89" height="17"/><rect x="28.500" y="836.500" width="142" height="17"/><rect x="28.500" y="939.500" width="190.500" height="17"/>
</g>
<g stroke="#8aa0ad"><path d="M43.500 648V663M43.500 746V762M43.500 837V853M43.500 940V956"/></g>
<g fill="#5f7f9f" stroke="#fff" stroke-width=".7">
<circle cx="35" cy="655.500" r="4.500"/><circle cx="35" cy="753.500" r="4.500"/><circle cx="35" cy="844.500" r="4.500"/><circle cx="35" cy="947.500" r="4.500"/>
</g>
<path fill="none" stroke="#fff" d="M33 653.500l4 4m0-4l-4 4M33 751.500l4 4m0-4l-4 4M33 842.500l4 4m0-4l-4 4M33 945.500l4 4m0-4l-4 4"/>
<path fill="#000" d="M47 651h4v8h-4zM47 950h4v-7h-4z" /><path fill="#708090" d="M51 651h4v8h-4zM47 750h8v8h-8zM47 841h8v8h-8zM51 943h4v8h-4z"/>
<text x="60" y="659" class="t" textLength="131" lengthAdjust="spacingAndGlyphs">Sistema de trenes Doc v4 (f f)</text>
<text x="59" y="757" class="t" textLength="56" lengthAdjust="spacingAndGlyphs">Willy Doc (t)</text>
<text x="59" y="848" class="t" textLength="109" lengthAdjust="spacingAndGlyphs">Awesome Evolution Doc</text>
<text x="59" y="951" class="t" textLength="157" lengthAdjust="spacingAndGlyphs">Barra Fuerza Fondo Mercado v4 (f)</text>

<!-- top legend -->
<rect x="28.500" y="22.500" width="424" height="15" fill="#dbe6ec" stroke="#8aa0ad"/>
<g stroke="#8aa0ad"><path d="M71.500 23V37M118.500 23V37M135.500 23V37M199.500 23V37M337.500 23V37"/></g>
<rect x="31" y="25" width="9" height="10" fill="#fff" stroke="#9ab"/><path fill="#e01010" d="M33 26h5v3h2l-4.500 5-4.500-5h2z"/>
<rect x="45" y="25" width="9" height="10" fill="#fff" stroke="#9ab"/><path fill="#10b010" d="M47 34v-4h-2l4.500-5 4.500 5h-2v4z"/>
<circle cx="62.500" cy="30" r="4.600" fill="#5f7f9f"/><path stroke="#fff" d="M60.500 28l4 4m0-4l-4 4"/>
<rect x="75.500" y="26.500" width="7" height="7" fill="#eef" stroke="#90a0aa"/><rect x="140" y="26.500" width="6" height="7" fill="#eef" stroke="#90a0aa"/>
<path stroke="#222" d="M122 26.500h1.500M125 26.500h6M122 29.500h1.500M125 29.500h6M122 32.500h1.500M125 32.500h6"/>
<rect x="203" y="26" width="8" height="8" fill="#708090"/>
<path d="M340.500 26V34" stroke="#e01010" stroke-width="1.300"/><path d="M342.500 26V34" stroke="#e0d010" stroke-width="1.300"/><path d="M344.500 26V34" stroke="#2020d0" stroke-width="1.300"/><path d="M346.500 26V34" stroke="#a020c0" stroke-width="1.300"/>
<text x="87" y="34" class="t" textLength="28" lengthAdjust="spacingAndGlyphs">Precio</text>
<text x="151" y="34" class="t" textLength="46" lengthAdjust="spacingAndGlyphs">Cierre (W)</text>
<text x="215" y="34" class="t" textLength="119" lengthAdjust="spacingAndGlyphs">Tunel Domenec v4 (t t t t t)</text>
<text x="352" y="34" class="t" textLength="97" lengthAdjust="spacingAndGlyphs">Control Total Doc v.6</text>

<!-- LEFT TOOLBAR -->
<rect x="0" y="22" width="28" height="988" fill="#9fbccb"/>
<rect x="0" y="22" width="1" height="1010" fill="#4d6c7e"/><rect x="27" y="22" width="1" height="988" fill="#6a8798"/>
<rect x="1" y="22" width="26" height="11" fill="url(#g2)"/><path fill="none" stroke="#7a97a8" stroke-width="1.300" d="M11 29l3-3 3 3"/>
<rect x="3.500" y="35.500" width="21" height="21" rx="3" fill="#8fa8b5" stroke="#6c8594"/>
<path fill="#fff" stroke="#555" d="M11 40v12l3-3 2 4 2-1-2-4h4z"/>
<circle cx="12" cy="66" r="4" fill="#dfe8ee" stroke="#222"/><path stroke="#222" stroke-width="2" d="M15 69l4 4"/>
<rect x="6" y="91" width="12" height="9" fill="none" stroke="#2060e0" stroke-dasharray="1.500 1.500"/><circle cx="13" cy="88" r="4" fill="#dfe8ee" stroke="#222"/><path stroke="#222" stroke-width="2" d="M16 91l4 4"/>
<path fill="#f2d000" stroke="#8a7000" d="M6 118q3-1 3-6 0-5 5-5t5 5q0 5 3 6z"/><path stroke="#00c" d="M6 106l4 3M22 106l-3 3"/>
<path fill="#f2d000" stroke="#8a7000" d="M6 140q3-1 3-6 0-5 5-5t5 5q0 5 3 6z"/>
<path fill="none" stroke="#0020e0" stroke-width="1.200" d="M5 159l4-9 3 9h6"/><path stroke="#f80" stroke-dasharray="2 1" d="M12 156h10"/><text x="18" y="164" font-size="8" font-weight="bold" style="fill:#0020e0">F</text>
<path stroke="#f80" stroke-dasharray="2 1" d="M8 178h10"/><path stroke="#0020e0" stroke-dasharray="2 1" d="M8 180h10"/><text x="18" y="185" font-size="8" font-weight="bold" style="fill:#0020e0">F</text>
<rect x="8" y="196" width="11" height="8" fill="#a8c8e8" stroke="#4080f0"/><path stroke="#0020e0" d="M17 196h4M19 194v4M6 204h4M8 202v4"/>
<rect x="8" y="218" width="11" height="8" fill="#b09098" stroke="#f00010"/><path stroke="#0020e0" d="M17 218h4M19 216v4M6 226h4M8 224v4"/>
<path stroke="#000" stroke-width="2" d="M10 246l8-7"/><path fill="#000" d="M14 238h6v6z"/><circle cx="9.500" cy="247" r="2" fill="none" stroke="#000"/>
<rect x="7.500" y="259.500" width="13" height="13" rx="2" fill="#a8c4e4" stroke="#6a90e0"/><text x="14" y="270" font-size="10" font-weight="bold" class="c">T</text>
<circle cx="14" cy="288" r="7" fill="#a8c4e4" stroke="#6a90e0"/><text x="14" y="292" font-size="10" font-weight="bold" class="c" style="fill:#108020">T</text>
<path stroke="#222" d="M10 312l8-7"/><circle cx="9.500" cy="313" r="2" fill="none" stroke="#222"/><circle cx="18.500" cy="305" r="2" fill="none" stroke="#222"/>
<path stroke="#80ff80" stroke-width="2" d="M14 332h9"/><circle cx="12.500" cy="332" r="1.600" fill="none" stroke="#60e060"/>
<path stroke="#20c020" stroke-width="2" d="M14 354h9"/><circle cx="12.500" cy="354" r="1.600" fill="none" stroke="#20c020"/>
<path stroke="#108010" stroke-width="2" d="M14 376h9"/><circle cx="12.500" cy="376" r="1.600" fill="none" stroke="#108010"/>
<path stroke="#f01010" stroke-width="2" d="M14 398h9"/><circle cx="12.500" cy="398" r="1.600" fill="none" stroke="#f01010"/>
<path fill="#b0b8b8" stroke="#556" d="M6 423l13-10 4 4-13 10z"/>
<rect x="6" y="434" width="16" height="8" fill="#90c0a0"/><rect x="6" y="442" width="16" height="8" fill="#c8a0a8"/><path fill="none" stroke="#fff" d="M7 447l4-5 3 2 5-6"/>
<ellipse cx="14" cy="463" rx="7" ry="5" fill="#b09098" stroke="#f01020" stroke-width="1.200"/><ellipse cx="14" cy="485" rx="7" ry="5" fill="#9a9a90" stroke="#905020" stroke-width="1.200"/><ellipse cx="14" cy="507" rx="7" ry="5" fill="#80a890" stroke="#108030" stroke-width="1.200"/><ellipse cx="14" cy="530" rx="7" ry="5" fill="#80d8a0" stroke="#10e030" stroke-width="1.200"/>
<path stroke="#0020e0" d="M18 457h4M20 455v4M18 479h4M20 477v4M18 501h4M20 499v4M18 524h4M20 522v4M5 469h4M7 467v4M5 491h4M7 489v4M5 513h4M7 511v4M5 536h4M7 534v4"/>
<path stroke="#222" d="M6 561l17-13"/><path stroke="#50b050" stroke-width="1.300" d="M6 582l17-17"/><path stroke="#f02020" stroke-width="1.300" d="M6 605l17-17"/>
<path stroke="#000" d="M5 618.500h18"/><path stroke="#ff9080" stroke-width="2" d="M5 640h18"/><path stroke="#10f010" stroke-width="2" d="M5 662h18"/><path stroke="#108020" stroke-width="2" d="M5 684h18"/><path stroke="#f01010" stroke-width="2" d="M5 706h18"/><path stroke="#6a9af0" stroke-width="2" d="M5 728h18"/><path stroke="#0000a0" stroke-width="2" d="M5 750h18"/><path stroke="#000" d="M14.500 763v18"/>
<path fill="none" stroke="#f05040" d="M6 799l14-11M6 799h16"/><path stroke="#0020e0" d="M12 796l3-3"/>
<circle cx="14" cy="815" r="6" fill="none" stroke="#f07040"/><path stroke="#0020e0" d="M11 816h5M13.500 813.500v5M17 810h4M19 808v4"/>
<text x="14" y="840" font-size="7" font-weight="bold" class="c" style="fill:#0020e0">3+5+</text><path stroke="#0020e0" d="M5 833l3 10M9 830l4 11"/>
<text x="14" y="862" font-size="7" font-weight="bold" class="c" style="fill:#0020e0">a+c+</text><path stroke="#0020e0" d="M7 850l7 14"/>
<path fill="none" stroke="#28a028" stroke-width="3" d="M8 881l4 5 9-10"/>
<path fill="#50b030" stroke="#2a7a20" d="M7 900h3l4-7 2 1-1 6h6v9h-14z"/>
<path stroke="#f01010" stroke-width="4" d="M8 920l12 13M20 920l-12 13"/>
<rect x="1" y="935" width="26" height="12" fill="url(#g2)"/><path fill="none" stroke="#222" d="M11 940l3 3 3-3"/>
<rect x="10" y="961" width="11" height="13" fill="#f8f8f8" stroke="#667"/><circle cx="10" cy="963" r="3.500" fill="#108020"/><path stroke="#222" stroke-width="2" d="M14 975l5-5"/>
<text x="14" y="1000" font-size="10" font-weight="bold" class="c" style="fill:#222">•••</text>

<!-- TOP TOOLBAR -->
<rect width="1915" height="22" fill="url(#g)"/>
<rect width="1915" height="1" fill="#44606f"/><rect y="21" width="1915" height="1" fill="#4a6676"/>
<g stroke="#7a97a8"><path d="M23.500 1V21M39.500 1V21M91.500 1V21M330.500 1V21M399.500 1V21M492.500 1V21M575.500 1V21M660.500 1V21M674.500 1V21M1850.500 1V21M1871.500 1V21"/></g>
<path stroke="#208020" stroke-width="2" d="M9 17V12M14 14V9M19 11V5"/>
<path fill="none" stroke="#60707c" d="M28 6q1-1 2 0 1-1 2 0v3M28 6v3M28 13q1-1 2 0 1-1 2 0v3M28 13v3"/>
<text x="44" y="15" class="t" textLength="30" lengthAdjust="spacingAndGlyphs">SPTRD</text><path fill="none" stroke="#333" d="M79 11l2.500 2.500 2.500-2.500"/>
<g fill="#b8d3df" stroke="#7593a4">
<rect x="95.500" y="4.500" width="20.500" height="14" rx="3"/><rect x="119.500" y="4.500" width="25" height="14" rx="3"/><rect x="148.500" y="4.500" width="18" height="14" rx="3"/><rect x="170.500" y="4.500" width="23" height="14" rx="3"/><rect x="197.500" y="4.500" width="23" height="14" rx="3"/><rect x="224.500" y="4.500" width="17" height="14" rx="3"/><rect x="245.500" y="4.500" width="15" height="14" rx="3"/><rect x="264.500" y="4.500" width="12" height="14" rx="3"/><rect x="280.500" y="4.500" width="14" height="14" rx="3"/><rect x="298.500" y="4.500" width="12" height="14" rx="3"/>
<rect x="314.500" y="4.500" width="14" height="14" rx="3" fill="#8fa9b6"/>
<rect x="403.500" y="4.500" width="23" height="14" rx="3"/><rect x="429.500" y="4.500" width="28" height="14" rx="3" fill="#8fa9b6"/><rect x="460.500" y="4.500" width="28" height="14" rx="3"/>
</g>
<g class="t c">
<text x="106" y="15">12s</text><text x="132" y="15">144s</text><text x="157.500" y="15">1m</text><text x="182" y="15">12m</text><text x="209" y="15">56m</text><text x="233" y="15">1h</text><text x="253" y="15">4h</text><text x="270.500" y="15">D</text><text x="287.500" y="15">W</text><text x="304.500" y="15">M</text><text x="321.500" y="15">Q</text>
<text x="415" y="15">5kU</text><text x="443.500" y="15">10kU</text><text x="474.500" y="15">35kU</text>
</g>
<text x="336" y="15" class="t" textLength="48" lengthAdjust="spacingAndGlyphs">1 trimestre</text><path fill="none" stroke="#333" d="M389 11l2.500 2.500 2.500-2.500"/>
<text x="497" y="15" class="t" textLength="63" lengthAdjust="spacingAndGlyphs">10 k unidades</text><path fill="none" stroke="#333" d="M565 11l2.500 2.500 2.500-2.500"/>
<path fill="none" stroke="#20a040" d="M581 11l5-5 5 4 6-3"/><path fill="none" stroke="#e03030" d="M581 8l5 4 5-4 6 3"/><path d="M582 19v-4M586 19v-3M590 19v-5M594 19v-3" stroke="#20a040" stroke-width="2.500"/>
<text x="602" y="15" class="t" textLength="53" lengthAdjust="spacingAndGlyphs">Indicadores</text>
<path fill="none" stroke="#333" d="M665 11l2.500 2.500 2.500-2.500"/>
<rect x="683" y="7" width="8" height="11" fill="#e8eef2" stroke="#99a"/><text x="687" y="16" font-size="9" font-weight="bold" class="c" style="fill:#778">i</text>
<circle cx="704" cy="13" r="3.500" fill="#80909c"/>
<rect x="713.500" y="5.500" width="39" height="15" rx="2" fill="#48e04c" stroke="#34b838"/><text x="733" y="16.500" class="c" font-size="10.200" style="fill:#fff">+2,34 %</text>
<text x="757" y="16" font-size="10" font-weight="bold" textLength="45" lengthAdjust="spacingAndGlyphs">6 feb 2026</text>
<rect x="806.500" y="5.500" width="93" height="15" rx="3" fill="#c6d8a8" stroke="#a8bc78"/><text x="809" y="16" class="t" textLength="88" lengthAdjust="spacingAndGlyphs">EEUU 500 Cash (1€)</text>
<path fill="none" stroke="#e85858" stroke-width="2.200" d="M1866 7q-6-3-9 1l-1 5"/><path fill="#e85858" d="M1853 11h7l-3.500 5z"/><path fill="none" stroke="#18b040" stroke-width="2.200" d="M1856 16q6 3 9-1l1-5"/><path fill="#18b040" d="M1869 12h-7l3.500-5z"/>
<path stroke="#7f98a6" stroke-width="2" d="M1876 14.500h8"/><path fill="none" stroke="#7f98a6" stroke-width="1.300" d="M1890 9h6v6h-6zM1892 9V7h6v6h-2"/><path stroke="#7f98a6" stroke-width="2" d="M1905 7l7 7M1912 7l-7 7"/>

<!-- BOTTOM BAR -->
<rect y="1010" width="1915" height="22" fill="url(#g)"/>
<rect y="1010" width="1915" height="1" fill="#6a8494"/><rect y="1031" width="1915" height="1" fill="#6a8494"/>
<rect x="0" y="1010" width="28" height="22" fill="#8faab9"/>
<path stroke="#505a5a" fill="none" d="M7 1027l4-12 3 8 3-8"/><path stroke="#e8b020" stroke-width="2" d="M15 1028l6-12"/>
<circle cx="33" cy="1021" r="2" fill="#fff" stroke="#557"/><circle cx="41" cy="1016" r="2" fill="#fff" stroke="#557"/><circle cx="41" cy="1026" r="2" fill="#222"/><path stroke="#fff" d="M33 1021l8-5M33 1021l8 5"/>
<rect x="53" y="1014" width="8" height="9" fill="#e8eef8" stroke="#88a"/><rect x="56" y="1018" width="9" height="8" rx="1" fill="#3a80e0"/>
<rect x="76" y="1015" width="9" height="12" fill="#f4f4f4" stroke="#556"/><path stroke="#e03030" d="M78 1018h5"/><path stroke="#20a040" d="M78 1022h5"/>
<path stroke="#20a040" stroke-width="3" d="M97 1016v11"/><path stroke="#e03030" stroke-width="3" d="M103 1015v11"/><path stroke="#334" d="M95 1021h11"/>
<rect x="115" y="1014" width="9" height="9" fill="#cde" stroke="#2060d0"/><rect x="119" y="1019" width="9" height="9" fill="#fff" stroke="#2060d0"/>
<text x="139" y="1025" font-size="11" class="c" style="fill:#667">«</text>
<rect x="148.500" y="1015.500" width="12" height="12" fill="#b8d3df" stroke="#60788a"/><path fill="none" stroke="#222" d="M155 1019l-2.500 2.500 2.500 2.500"/>
<rect x="161" y="1015.500" width="1591" height="12" fill="url(#g2)" stroke="#7a97a8"/>
<rect x="161" y="1015.500" width="317" height="12" fill="#8fafbf" stroke="#7a97a8"/>
<rect x="1752.500" y="1015.500" width="12" height="12" fill="#b8d3df" stroke="#60788a"/><path fill="none" stroke="#222" d="M1757.500 1019l2.500 2.500-2.500 2.500"/>
<path fill="none" stroke="#7aa0d0" stroke-width="2" d="M1772 1018h7q4 0 4 4t-4 5"/><path fill="#7aa0d0" d="M1775 1014v8l-5-4z"/>
<path fill="none" stroke="#7aa0d0" stroke-width="2" d="M1806 1018h-7q-4 0-4 4t4 5"/><path fill="#7aa0d0" d="M1803 1014v8l5-4z"/>
<path stroke="#e03030" stroke-width="3" d="M1819 1019v8"/><path stroke="#20a040" stroke-width="3" d="M1825 1015v11"/><path stroke="#222" stroke-width="2" d="M1818 1027l10-10"/>
<circle cx="1842" cy="1019" r="4.500" fill="#e8f0f4" stroke="#222"/><path stroke="#222" stroke-width="2" d="M1845 1023l4 4"/><path stroke="#0030e0" d="M1851 1014v8M1836 1028h8"/>
<circle cx="1864" cy="1019" r="4.500" fill="#e8f0f4" stroke="#222"/><path stroke="#222" stroke-width="2" d="M1867 1023l4 4"/><path stroke="#0030c0" stroke-width="1.500" d="M1861.500 1019h5"/>
<circle cx="1886" cy="1019" r="4.500" fill="#e8f0f4" stroke="#222"/><path stroke="#222" stroke-width="2" d="M1889 1023l4 4"/><path stroke="#0030c0" stroke-width="1.500" d="M1883.500 1019h5M1886 1016.500v5"/>
<path stroke="#556" stroke-dasharray="1.500 1" stroke-width="2" d="M1903 1017h10"/><path fill="#2060d0" d="M1906 1021h3v3h2l-3.500 4-3.500-4h2z"/>
</svg>
</body></html>
